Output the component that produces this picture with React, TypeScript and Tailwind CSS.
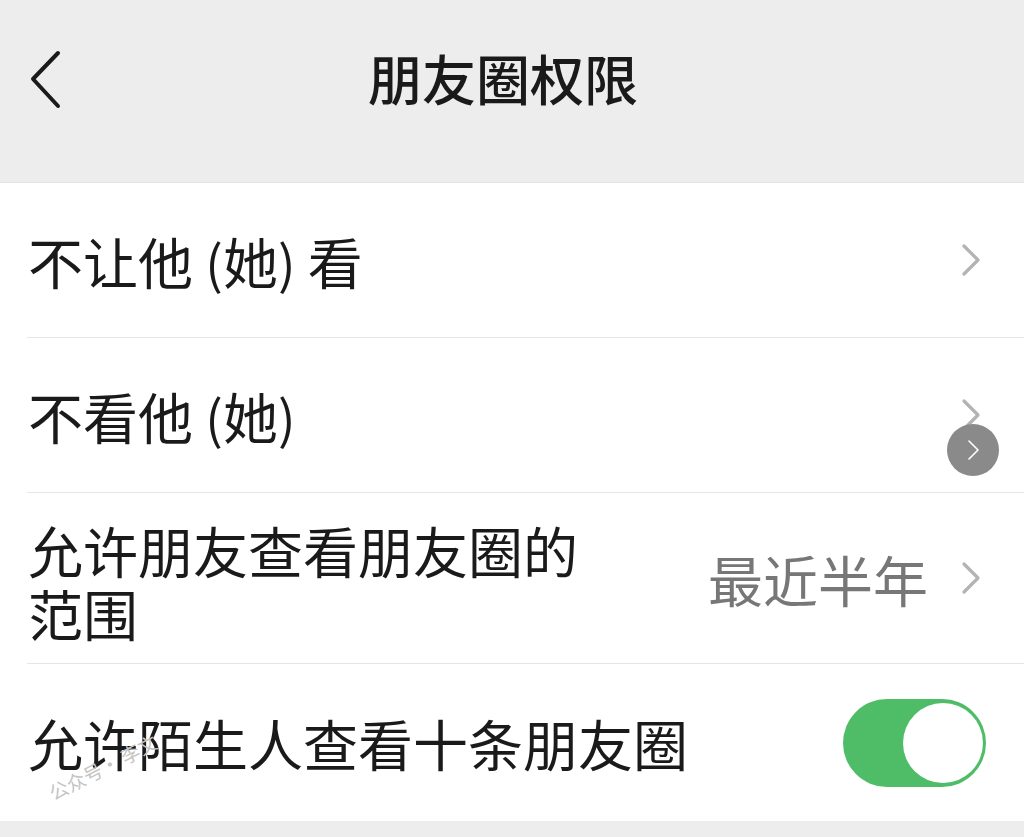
import React from "react";

const font = { fontFamily: '"Noto Sans CJK SC", "Noto Sans", sans-serif' };

function Chevron() {
  return (
    <svg width="22" height="34" viewBox="0 0 22 34" className="shrink-0">
      <polyline points="4,3 18,17 4,31" fill="none" stroke="#b3b3b3" strokeWidth="3.2" strokeLinecap="round" strokeLinejoin="round" />
    </svg>
  );
}

export default function App() {
  return (
    <div className="relative w-[1024px] h-[837px] overflow-hidden bg-[#ededed] text-[#1a1a1a]" style={font}>
      {/* Header */}
      <div className="relative h-[183px] flex items-start justify-center border-b border-[#e2e2e2]">
        <svg width="40" height="64" viewBox="0 0 40 64" className="absolute left-[24px] top-[48px]">
          <polyline points="34,5 9,31 34,58" fill="none" stroke="#1a1a1a" strokeWidth="4" strokeLinecap="round" strokeLinejoin="round" />
        </svg>
        <div className="mt-[42px] mr-[18px] text-[54px] leading-[72px] font-medium">朋友圈权限</div>
      </div>

      {/* List */}
      <div className="bg-white">
        <div className="h-[154px] flex items-center justify-between pl-[28px] pr-[42px]">
          <div className="text-[55px] leading-none whitespace-pre">不让他 <span className="text-[52px]">(</span>她<span className="text-[52px]">)</span> 看</div>
          <Chevron />
        </div>
        <div className="ml-[27px] h-px bg-[#e6e6e6]" />
        <div className="h-[154px] flex items-center justify-between pl-[28px] pr-[42px]">
          <div className="text-[55px] leading-none whitespace-pre">不看他 <span className="text-[52px]">(</span>她<span className="text-[52px]">)</span></div>
          <Chevron />
        </div>
        <div className="ml-[27px] h-px bg-[#e6e6e6]" />
        <div className="h-[170px] flex items-center justify-between pl-[28px] pr-[42px]">
          <div className="text-[55px] leading-[63px] w-[570px] pt-[6px]">允许朋友查看朋友圈的<br />范围</div>
          <div className="flex items-center gap-[32px]">
            <div className="text-[55px] leading-none text-[#777777]">最近半年</div>
            <Chevron />
          </div>
        </div>
        <div className="ml-[27px] h-px bg-[#e6e6e6]" />
        <div className="h-[157px] flex items-center justify-between pl-[28px] pr-[38px]">
          <div className="text-[55px] leading-none">允许陌生人查看十条朋友圈</div>
          <div className="w-[143px] h-[88px] rounded-full bg-[#4fbd67] flex items-center justify-end pr-[3px]">
            <div className="w-[80px] h-[80px] rounded-full bg-white" />
          </div>
        </div>
      </div>

      {/* Floating circle */}
      <div className="absolute left-[947px] top-[424px] w-[52px] h-[52px] rounded-full bg-[#8a8a8a] flex items-center justify-center">
        <svg width="16" height="24" viewBox="0 0 16 24">
          <polyline points="4,3 13,12 4,21" fill="none" stroke="#ffffff" strokeWidth="1.6" strokeLinecap="round" strokeLinejoin="round" />
        </svg>
      </div>

      {/* Watermark */}
      <div className="absolute left-[50px] top-[784px] text-[19px] leading-none text-[#c4c4c4] origin-left -rotate-[27deg] whitespace-nowrap">
        公众号· 李文
      </div>
    </div>
  );
}
